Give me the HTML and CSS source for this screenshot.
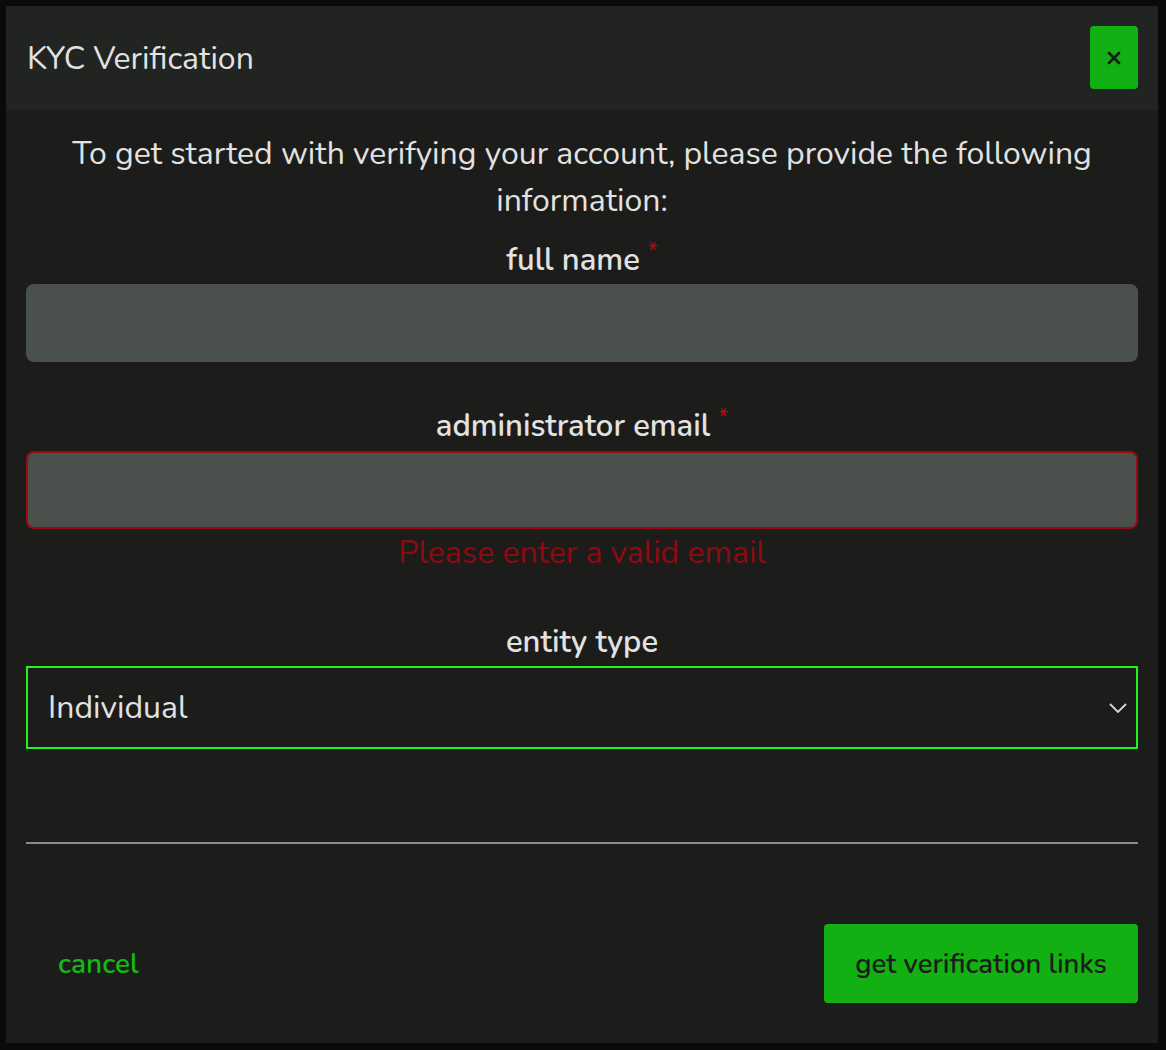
FILE: index.html
```html
<!DOCTYPE html>
<html lang="en">
<head>
    <meta charset="UTF-8">
    <meta name="viewport" content="width=device-width, initial-scale=1.0">
    <title>KYC Verification</title>
    <link rel="stylesheet" href="styles.css">
</head>
<body>
    <div class="modal">
        <div class="modalHead">
            <h2>KYC Verification</h2>
            <button class="closeBtn">
                <svg width="16" height="16" viewBox="0 0 16 16">
                    <path d="M3 3 L13 13 M13 3 L3 13" stroke="#1c1d1b" stroke-width="2.8" stroke-linecap="round"/>
                </svg>
            </button>
        </div>
        <div class="modalBody">
            <p class="intro">To get started with verifying your account, please provide the following information:</p>

            <div class="field">
                <label>full name<span class="star">*</span></label>
                <input type="text" class="textInp">
            </div>

            <div class="field">
                <label>administrator email<span class="star">*</span></label>
                <input type="text" class="textInp bad">
                <div class="err">Please enter a valid email</div>
            </div>

            <div class="field">
                <label>entity type</label>
                <div class="select">
                    <span>Individual</span>
                    <svg width="18" height="10" viewBox="0 0 18 10">
                        <path d="M1 1 L9 9 L17 1" fill="none" stroke="#d8d8d8" stroke-width="1.8"/>
                    </svg>
                </div>
            </div>

            <hr>

            <div class="footer">
                <a class="cancel" href="#">cancel</a>
                <button class="submit">get verification links</button>
            </div>
        </div>
    </div>
</body>
</html>
```

FILE: styles.css
```css
body{
    margin: 0;
    background-color: #0a0a0a;
    font-family: "Nunito", "Lato", "Noto Sans", sans-serif;
    height: 1050px;
}
.modal{
    margin: 6px 0 0 6px;
    width: 1152px;
    height: 1037px;
    background-color: #1c1d1b;
    display: flex;
    flex-direction: column;
}
.modalHead{
    background-color: #222422;
    height: 104px;
    display: flex;
    align-items: center;
    justify-content: space-between;
    padding: 0 20px 0 21px;
    box-sizing: border-box;
}
.modalHead h2{
    margin: 0;
    font-weight: 400;
    font-size: 32px;
    color: #e2e2e2;
}
.closeBtn{
    width: 48px;
    height: 63px;
    border: none;
    border-radius: 4px;
    background-color: #12b012;
    display: flex;
    align-items: center;
    justify-content: center;
    margin-top: -1px;
}
.modalBody{
    padding: 20px 20px 0 20px;
    color: #e2e2e2;
}
.intro{
    margin: 0 20px;
    text-align: center;
    font-size: 32px;
    line-height: 47px;
}
.field{
    display: flex;
    flex-direction: column;
    align-items: center;
    margin-top: 13px;
}
.field label{
    font-size: 31px;
    font-weight: 600;
    line-height: 46px;
    height: 46px;
    margin-bottom: 1px;
}
.star{
    color: #a50d14;
    font-size: 22px;
    line-height: 0;
    vertical-align: 12px;
    margin-left: 8px;
}
.textInp{
    width: 100%;
    height: 78px;
    box-sizing: border-box;
    background-color: #4a504b;
    border: 2px solid #4a504b;
    border-radius: 8px;
    margin: 0 0 28px 0;
}
.textInp.bad{
    border-color: #9a0a12;
    margin: 1px 0 4px 0;
}
.err{
    color: #8f0a10;
    font-size: 32px;
    line-height: 40px;
    margin-bottom: 33px;
}
.select{
    width: 100%;
    height: 83px;
    box-sizing: border-box;
    border: 2px solid #1ef51e;
    display: flex;
    align-items: center;
    justify-content: space-between;
    padding: 0 9px 0 20px;
    font-size: 32px;
}
hr{
    border: none;
    border-top: 2px solid #8a8a8a;
    margin: 93px 0 0 0;
}
.footer{
    display: flex;
    justify-content: space-between;
    align-items: center;
    margin-top: 80px;
}
.cancel{
    color: #14b814;
    text-decoration: none;
    font-size: 28px;
    font-weight: 600;
    margin-left: 32px;
}
.submit{
    width: 314px;
    height: 79px;
    border: none;
    border-radius: 4px;
    background-color: #12b012;
    color: #1c1d1b;
    font-family: inherit;
    font-size: 27.5px;
    font-weight: 600;
}
```
